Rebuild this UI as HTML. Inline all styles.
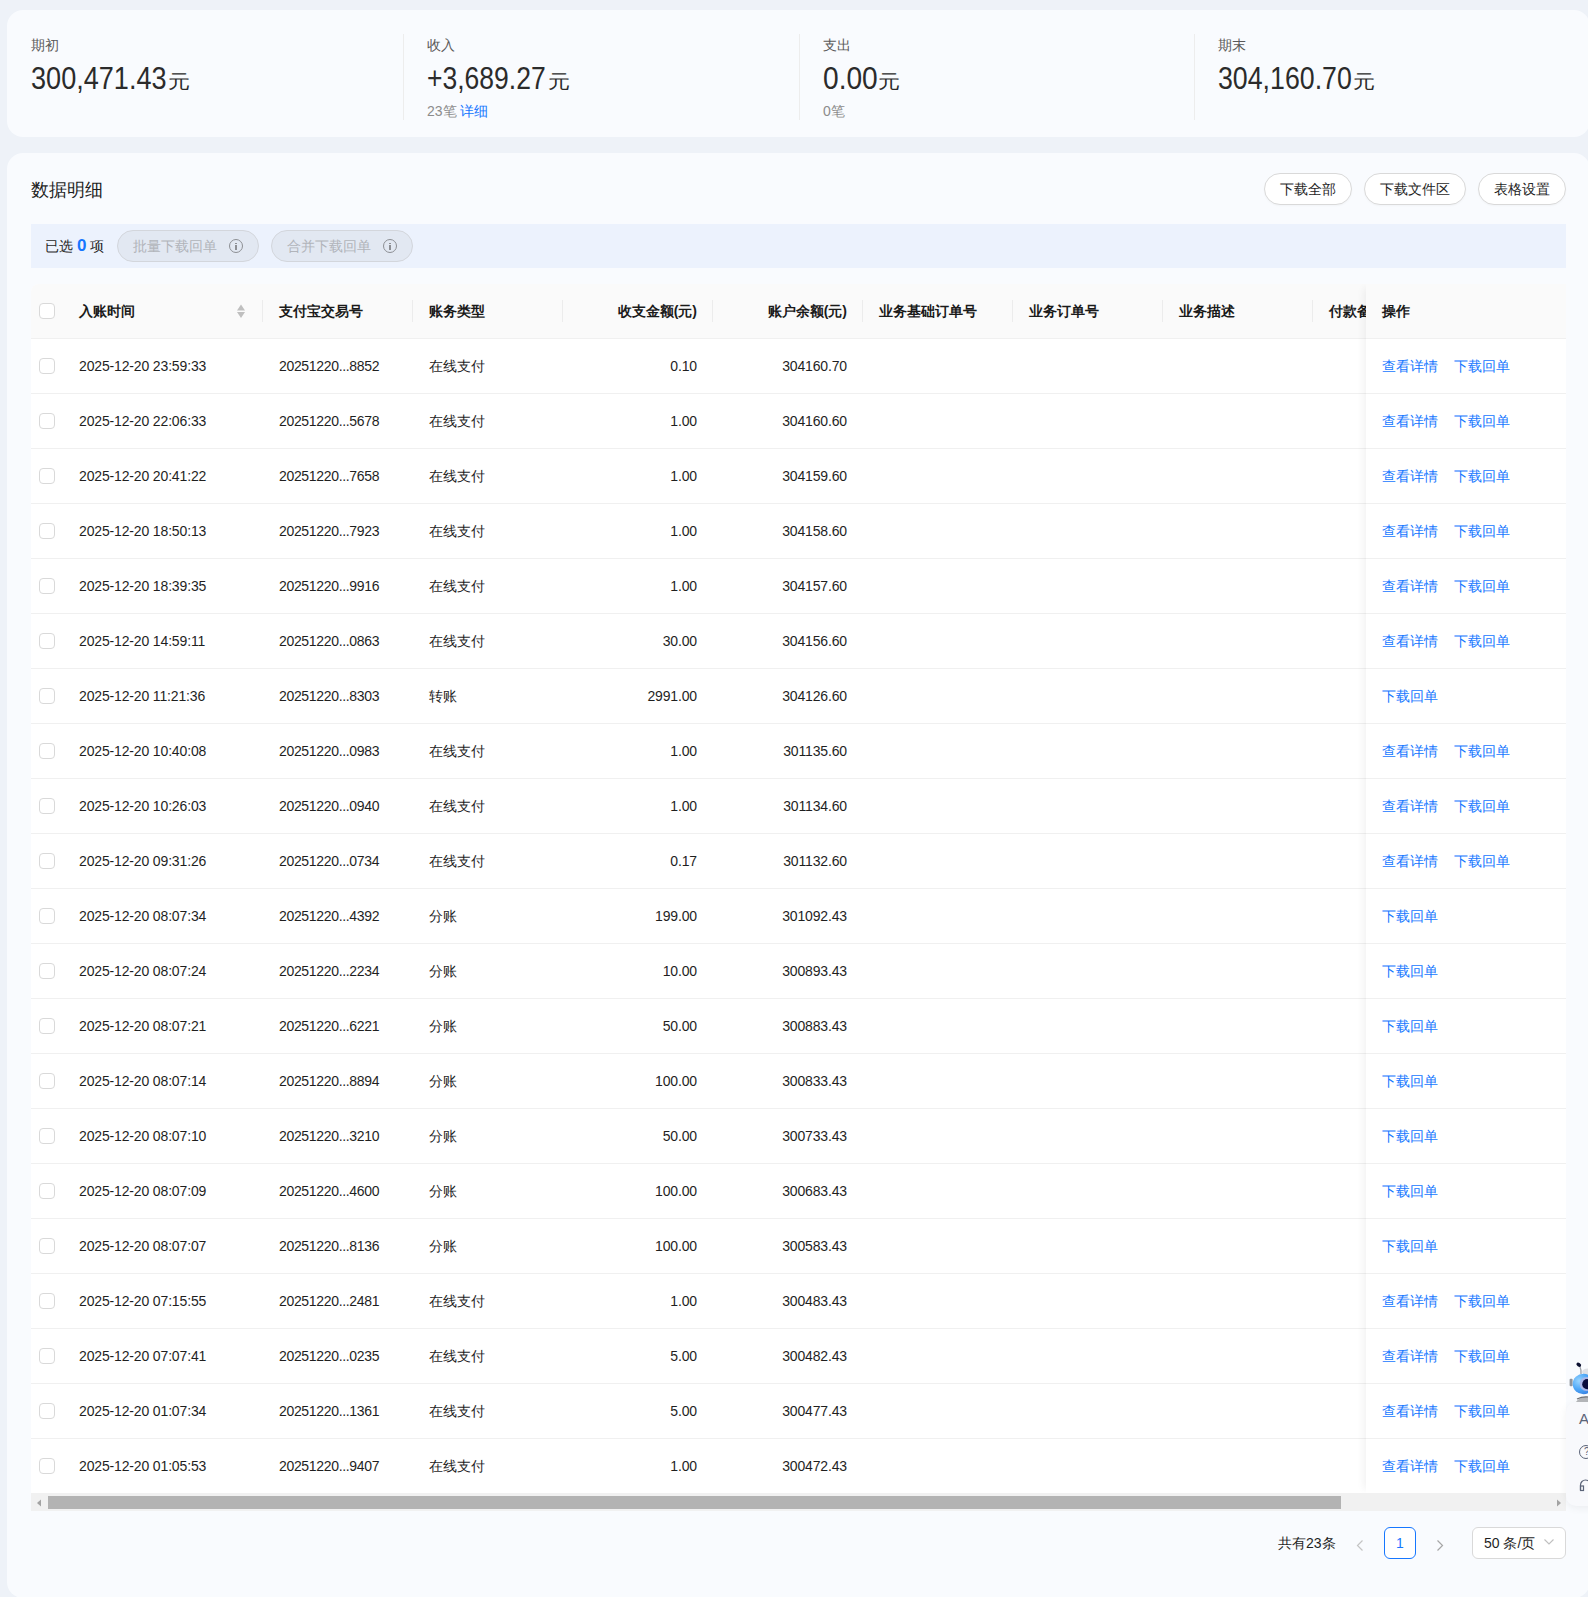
<!DOCTYPE html>
<html><head><meta charset="utf-8">
<style>
*{margin:0;padding:0;box-sizing:border-box}
html,body{width:1588px;height:1597px;overflow:hidden}
body{background:#eef2f8;font-family:"Liberation Sans",sans-serif;color:#1f1f1f;position:relative}
.abs{position:absolute}
.card{position:absolute;background:#f9fbfe;border-radius:16px}
.stat{position:absolute;top:10px;height:127px}
.stat .lbl{position:absolute;left:0;top:34px;font-size:14px;line-height:20px;color:#595959;white-space:nowrap}
.stat .num{position:absolute;left:0;top:49px;font-size:29px;line-height:40px;color:#2b2b2b;white-space:nowrap}
.stat .num .n{display:inline-block;transform-origin:0 30px;letter-spacing:0}
.stat .num small{position:absolute;top:2px;font-size:22px;letter-spacing:0;transform:scaleY(0.86);transform-origin:0 29px}
.stat .sub{position:absolute;left:0;top:101px;font-size:14px;line-height:20px;color:#8c8c8c;white-space:nowrap}
.stat .sub a{color:#1677ff}
.divider{position:absolute;top:34px;width:1px;height:86px;background:#ededed}
.title{position:absolute;left:31px;top:177px;font-size:18px;line-height:26px;color:#1f1f1f}
.btn{position:absolute;top:173px;height:32px;border:1px solid #d9d9d9;border-radius:16px;background:#fff;font-size:14px;line-height:30px;text-align:center;color:#1f1f1f;box-shadow:0 1px 2px rgba(0,0,0,0.03)}
.selbar{position:absolute;left:31px;top:224px;width:1535px;height:44px;background:#ecf2fd}
.selbar .txt{position:absolute;left:14px;top:0;line-height:44px;font-size:14px;color:#1f1f1f;white-space:nowrap}
.selbar .txt b{color:#1677ff;font-size:17px}
.chip{position:absolute;top:6px;height:32px;width:142px;border:1px solid #d3d6dc;border-radius:16px;background:#e2e8f2;color:#b1b4ba;font-size:14px;line-height:30px;padding-left:15px;white-space:nowrap}
.chip i{position:absolute;left:111px;top:8px;width:14px;height:14px;border:1.3px solid #8d8f94;border-radius:50%}
.chip i:before{content:"";position:absolute;left:5px;top:2.5px;width:1.5px;height:1.5px;background:#8d8f94}
.chip i:after{content:"";position:absolute;left:5px;top:5px;width:1.5px;height:5px;background:#8d8f94}
.table{position:absolute;left:31px;top:284px;width:1535px;height:1209px;background:#fff;overflow:hidden;border-radius:8px 0 0 0}
.thead{position:absolute;left:0;top:0;width:1535px;height:55px;background:#fafafa;border-bottom:1px solid #f0f0f0}
.th{position:absolute;top:0;line-height:54px;font-size:14px;font-weight:bold;color:#1a1a1a;white-space:nowrap}
.sep{position:absolute;top:16px;width:1px;height:22px;background:#ececec}
.cb{position:absolute;left:8px;width:16px;height:16px;border:1px solid #d9d9d9;border-radius:4px;background:#fff}
.thead .cb{top:19px}
.row{position:absolute;left:0;width:1535px;height:55px;border-bottom:1px solid #f0f0f0;font-size:14px;color:#1f1f1f}
.row .cb{top:19px}
.row span{position:absolute;top:0;line-height:54px;white-space:nowrap;letter-spacing:-0.15px}
.row .c2{letter-spacing:-0.33px}
.c1{left:48px}.c2{left:248px}.c3{left:398px}
.c4{right:869px;text-align:right}.c5{right:719px;text-align:right}
.fixed{position:absolute;left:1335px;top:0;width:200px;height:1209px;background:#fff;box-shadow:-6px 0 8px -4px rgba(0,0,0,0.06)}
.fhead{position:absolute;left:0;top:0;width:200px;height:55px;background:#fafafa;border-bottom:1px solid #f0f0f0}
.frow{position:absolute;left:0;width:200px;height:55px;border-bottom:1px solid #f0f0f0}
.ops{position:absolute;left:16px;top:0;line-height:54px;font-size:14px;white-space:nowrap}
.ops a{color:#1677ff;margin-right:16px}
.scroll{position:absolute;left:31px;top:1493px;width:1535px;height:18px;background:#f1f1f1}
.thumb{position:absolute;left:17px;top:3px;width:1293px;height:13px;background:#b3b3b3}
.pager{position:absolute;top:1527px;height:32px;font-size:14px;line-height:32px;color:#1f1f1f;white-space:nowrap}
</style></head><body>
<div class="card" style="left:7px;top:10px;width:1583px;height:127px"></div>
<div class="stat" style="left:31px"><div class="lbl" style="top:25px">期初</div><div class="num"><span class="n" style="transform:scale(0.934,1.06)">300,471.43</span><small style="left:137px">元</small></div></div>
<div class="divider" style="left:403px"></div>
<div class="stat" style="left:427px"><div class="lbl" style="top:25px">收入</div><div class="num"><span class="n" style="transform:scale(0.914,1.06)">+3,689.27</span><small style="left:121px">元</small></div><div class="sub" style="top:91px">23笔 <a>详细</a></div></div>
<div class="divider" style="left:799px"></div>
<div class="stat" style="left:823px"><div class="lbl" style="top:25px">支出</div><div class="num"><span class="n" style="transform:scale(0.97,1.06)">0.00</span><small style="left:55px">元</small></div><div class="sub" style="top:91px">0笔</div></div>
<div class="divider" style="left:1194px"></div>
<div class="stat" style="left:1218px"><div class="lbl" style="top:25px">期末</div><div class="num"><span class="n" style="transform:scale(0.922,1.06)">304,160.70</span><small style="left:135px">元</small></div></div>

<div class="card" style="left:7px;top:153px;width:1583px;height:1445px"></div>
<div class="title">数据明细</div>
<div class="btn" style="left:1264px;width:88px">下载全部</div>
<div class="btn" style="left:1364px;width:102px">下载文件区</div>
<div class="btn" style="left:1478px;width:88px">表格设置</div>
<div class="selbar"><div class="txt">已选 <b>0</b> 项</div>
<div class="chip" style="left:86px">批量下载回单<i></i></div>
<div class="chip" style="left:240px">合并下载回单<i></i></div>
</div>
<div class="table">
<div class="thead"><i class="cb"></i>
<span class="th" style="left:48px">入账时间</span>
<svg class="abs" style="left:205px;top:19px" width="10" height="16" viewBox="0 0 10 16"><path d="M1 7.5 L5 1.5 L9 7.5Z M1 9 L5 15 L9 9Z" fill="#bfbfbf"/></svg>
<span class="sep" style="left:231px"></span>
<span class="th" style="left:248px">支付宝交易号</span>
<span class="sep" style="left:381px"></span>
<span class="th" style="left:398px">账务类型</span>
<span class="sep" style="left:531px"></span>
<span class="th" style="right:869px">收支金额(元)</span>
<span class="sep" style="left:681px"></span>
<span class="th" style="right:719px">账户余额(元)</span>
<span class="sep" style="left:831px"></span>
<span class="th" style="left:848px">业务基础订单号</span>
<span class="sep" style="left:981px"></span>
<span class="th" style="left:998px">业务订单号</span>
<span class="sep" style="left:1131px"></span>
<span class="th" style="left:1148px">业务描述</span>
<span class="sep" style="left:1281px"></span>
<span class="th" style="left:1298px">付款备注</span>
</div>
<div class="row" style="top:55px"><i class="cb"></i><span class="c1">2025-12-20 23:59:33</span><span class="c2">20251220...8852</span><span class="c3">在线支付</span><span class="c4">0.10</span><span class="c5">304160.70</span></div>
<div class="row" style="top:110px"><i class="cb"></i><span class="c1">2025-12-20 22:06:33</span><span class="c2">20251220...5678</span><span class="c3">在线支付</span><span class="c4">1.00</span><span class="c5">304160.60</span></div>
<div class="row" style="top:165px"><i class="cb"></i><span class="c1">2025-12-20 20:41:22</span><span class="c2">20251220...7658</span><span class="c3">在线支付</span><span class="c4">1.00</span><span class="c5">304159.60</span></div>
<div class="row" style="top:220px"><i class="cb"></i><span class="c1">2025-12-20 18:50:13</span><span class="c2">20251220...7923</span><span class="c3">在线支付</span><span class="c4">1.00</span><span class="c5">304158.60</span></div>
<div class="row" style="top:275px"><i class="cb"></i><span class="c1">2025-12-20 18:39:35</span><span class="c2">20251220...9916</span><span class="c3">在线支付</span><span class="c4">1.00</span><span class="c5">304157.60</span></div>
<div class="row" style="top:330px"><i class="cb"></i><span class="c1">2025-12-20 14:59:11</span><span class="c2">20251220...0863</span><span class="c3">在线支付</span><span class="c4">30.00</span><span class="c5">304156.60</span></div>
<div class="row" style="top:385px"><i class="cb"></i><span class="c1">2025-12-20 11:21:36</span><span class="c2">20251220...8303</span><span class="c3">转账</span><span class="c4">2991.00</span><span class="c5">304126.60</span></div>
<div class="row" style="top:440px"><i class="cb"></i><span class="c1">2025-12-20 10:40:08</span><span class="c2">20251220...0983</span><span class="c3">在线支付</span><span class="c4">1.00</span><span class="c5">301135.60</span></div>
<div class="row" style="top:495px"><i class="cb"></i><span class="c1">2025-12-20 10:26:03</span><span class="c2">20251220...0940</span><span class="c3">在线支付</span><span class="c4">1.00</span><span class="c5">301134.60</span></div>
<div class="row" style="top:550px"><i class="cb"></i><span class="c1">2025-12-20 09:31:26</span><span class="c2">20251220...0734</span><span class="c3">在线支付</span><span class="c4">0.17</span><span class="c5">301132.60</span></div>
<div class="row" style="top:605px"><i class="cb"></i><span class="c1">2025-12-20 08:07:34</span><span class="c2">20251220...4392</span><span class="c3">分账</span><span class="c4">199.00</span><span class="c5">301092.43</span></div>
<div class="row" style="top:660px"><i class="cb"></i><span class="c1">2025-12-20 08:07:24</span><span class="c2">20251220...2234</span><span class="c3">分账</span><span class="c4">10.00</span><span class="c5">300893.43</span></div>
<div class="row" style="top:715px"><i class="cb"></i><span class="c1">2025-12-20 08:07:21</span><span class="c2">20251220...6221</span><span class="c3">分账</span><span class="c4">50.00</span><span class="c5">300883.43</span></div>
<div class="row" style="top:770px"><i class="cb"></i><span class="c1">2025-12-20 08:07:14</span><span class="c2">20251220...8894</span><span class="c3">分账</span><span class="c4">100.00</span><span class="c5">300833.43</span></div>
<div class="row" style="top:825px"><i class="cb"></i><span class="c1">2025-12-20 08:07:10</span><span class="c2">20251220...3210</span><span class="c3">分账</span><span class="c4">50.00</span><span class="c5">300733.43</span></div>
<div class="row" style="top:880px"><i class="cb"></i><span class="c1">2025-12-20 08:07:09</span><span class="c2">20251220...4600</span><span class="c3">分账</span><span class="c4">100.00</span><span class="c5">300683.43</span></div>
<div class="row" style="top:935px"><i class="cb"></i><span class="c1">2025-12-20 08:07:07</span><span class="c2">20251220...8136</span><span class="c3">分账</span><span class="c4">100.00</span><span class="c5">300583.43</span></div>
<div class="row" style="top:990px"><i class="cb"></i><span class="c1">2025-12-20 07:15:55</span><span class="c2">20251220...2481</span><span class="c3">在线支付</span><span class="c4">1.00</span><span class="c5">300483.43</span></div>
<div class="row" style="top:1045px"><i class="cb"></i><span class="c1">2025-12-20 07:07:41</span><span class="c2">20251220...0235</span><span class="c3">在线支付</span><span class="c4">5.00</span><span class="c5">300482.43</span></div>
<div class="row" style="top:1100px"><i class="cb"></i><span class="c1">2025-12-20 01:07:34</span><span class="c2">20251220...1361</span><span class="c3">在线支付</span><span class="c4">5.00</span><span class="c5">300477.43</span></div>
<div class="row" style="top:1155px"><i class="cb"></i><span class="c1">2025-12-20 01:05:53</span><span class="c2">20251220...9407</span><span class="c3">在线支付</span><span class="c4">1.00</span><span class="c5">300472.43</span></div>
<div class="fixed"><div class="fhead"><span class="th" style="left:16px">操作</span></div>
<div class="frow" style="top:55px"><div class="ops"><a>查看详情</a><a>下载回单</a></div></div>
<div class="frow" style="top:110px"><div class="ops"><a>查看详情</a><a>下载回单</a></div></div>
<div class="frow" style="top:165px"><div class="ops"><a>查看详情</a><a>下载回单</a></div></div>
<div class="frow" style="top:220px"><div class="ops"><a>查看详情</a><a>下载回单</a></div></div>
<div class="frow" style="top:275px"><div class="ops"><a>查看详情</a><a>下载回单</a></div></div>
<div class="frow" style="top:330px"><div class="ops"><a>查看详情</a><a>下载回单</a></div></div>
<div class="frow" style="top:385px"><div class="ops"><a>下载回单</a></div></div>
<div class="frow" style="top:440px"><div class="ops"><a>查看详情</a><a>下载回单</a></div></div>
<div class="frow" style="top:495px"><div class="ops"><a>查看详情</a><a>下载回单</a></div></div>
<div class="frow" style="top:550px"><div class="ops"><a>查看详情</a><a>下载回单</a></div></div>
<div class="frow" style="top:605px"><div class="ops"><a>下载回单</a></div></div>
<div class="frow" style="top:660px"><div class="ops"><a>下载回单</a></div></div>
<div class="frow" style="top:715px"><div class="ops"><a>下载回单</a></div></div>
<div class="frow" style="top:770px"><div class="ops"><a>下载回单</a></div></div>
<div class="frow" style="top:825px"><div class="ops"><a>下载回单</a></div></div>
<div class="frow" style="top:880px"><div class="ops"><a>下载回单</a></div></div>
<div class="frow" style="top:935px"><div class="ops"><a>下载回单</a></div></div>
<div class="frow" style="top:990px"><div class="ops"><a>查看详情</a><a>下载回单</a></div></div>
<div class="frow" style="top:1045px"><div class="ops"><a>查看详情</a><a>下载回单</a></div></div>
<div class="frow" style="top:1100px"><div class="ops"><a>查看详情</a><a>下载回单</a></div></div>
<div class="frow" style="top:1155px"><div class="ops"><a>查看详情</a><a>下载回单</a></div></div>
</div>
</div>
<div class="scroll"><div class="thumb"></div>
<svg class="abs" style="left:5px;top:6px" width="6" height="8" viewBox="0 0 6 8"><path d="M5 0.5 L1 4 L5 7.5Z" fill="#a3a3a3"/></svg>
<svg class="abs" style="left:1525px;top:6px" width="6" height="8" viewBox="0 0 6 8"><path d="M1 0.5 L5 4 L1 7.5Z" fill="#a3a3a3"/></svg>
</div>
<!-- side panel -->
<div class="abs" style="left:1566px;top:1402px;width:40px;height:104px;background:#f8f9fc;border-radius:10px;box-shadow:0 2px 8px rgba(0,0,0,0.06)"></div>
<div class="abs" style="left:1579px;top:1410px;font-size:15px;line-height:18px;color:#5b6478">A</div>
<div class="abs" style="left:1579px;top:1445px;width:14px;height:14px;border:1.2px solid #5b6478;border-radius:50%"></div>
<div class="abs" style="left:1584px;top:1446px;font-size:10px;line-height:12px;color:#5b6478">?</div>
<svg class="abs" style="left:1579px;top:1478px" width="12" height="14" viewBox="0 0 12 14"><path d="M1.5 12 V7 A5 5 0 0 1 11.5 7" fill="none" stroke="#5b6478" stroke-width="1.2"/><rect x="1.5" y="8" width="3" height="4.5" fill="none" stroke="#5b6478" stroke-width="1.2"/></svg>
<!-- robot -->
<svg class="abs" style="left:1566px;top:1360px" width="22" height="44" viewBox="0 0 22 44">
<defs><radialGradient id="rg" cx="0.3" cy="0.35" r="0.9"><stop offset="0" stop-color="#9ad6ff"/><stop offset="0.45" stop-color="#4fa8f7"/><stop offset="1" stop-color="#2a6bd6"/></radialGradient></defs>
<ellipse cx="22" cy="12" rx="6" ry="3.5" fill="#dfe1e5"/>
<path d="M14 7 Q15.5 10 15 14" stroke="#9ea3ab" stroke-width="1.3" fill="none"/>
<ellipse cx="12.8" cy="4.8" rx="2.6" ry="1.8" fill="#0b1030" transform="rotate(35 12.8 4.8)"/>
<rect x="3.6" y="18.8" width="3" height="7.4" rx="1" fill="#8f959d"/>
<path d="M10 42 Q13 37 22 36.5 V42Z" fill="#b3b5b8"/>
<path d="M11 39 Q16 36.5 22 37" stroke="#6d7075" stroke-width="1.2" fill="none"/>
<ellipse cx="17.5" cy="24" rx="10.8" ry="10.2" fill="url(#rg)"/>
<circle cx="20.5" cy="24" r="6.9" fill="#a9b6e8"/>
<circle cx="21.3" cy="24.2" r="5.1" fill="#0a0c3c"/>
</svg>
<div class="pager" style="left:1278px">共有23条</div>
<svg class="abs" style="left:1354px;top:1538px" width="12" height="14" viewBox="0 0 12 14"><path d="M8.5 2.5 L3.5 7.5 L8.5 12.5" fill="none" stroke="#c4c4c4" stroke-width="1.2"/></svg>
<div class="abs" style="left:1384px;top:1527px;width:32px;height:32px;border:1px solid #1677ff;border-radius:6px;color:#1677ff;font-size:14px;line-height:30px;text-align:center;background:#fff">1</div>
<svg class="abs" style="left:1434px;top:1538px" width="12" height="14" viewBox="0 0 12 14"><path d="M3.5 2.5 L8.5 7.5 L3.5 12.5" fill="none" stroke="#a6a6a6" stroke-width="1.2"/></svg>
<div class="abs" style="left:1472px;top:1527px;width:94px;height:32px;border:1px solid #d9d9d9;border-radius:6px;background:#fff;font-size:14px;line-height:30px;padding-left:11px;color:#1f1f1f;white-space:nowrap">50 条/页</div>
<svg class="abs" style="left:1543px;top:1537px" width="12" height="10" viewBox="0 0 12 10"><path d="M1.5 2.5 L6 7 L10.5 2.5" fill="none" stroke="#bfbfbf" stroke-width="1.1"/></svg>

</body></html>
